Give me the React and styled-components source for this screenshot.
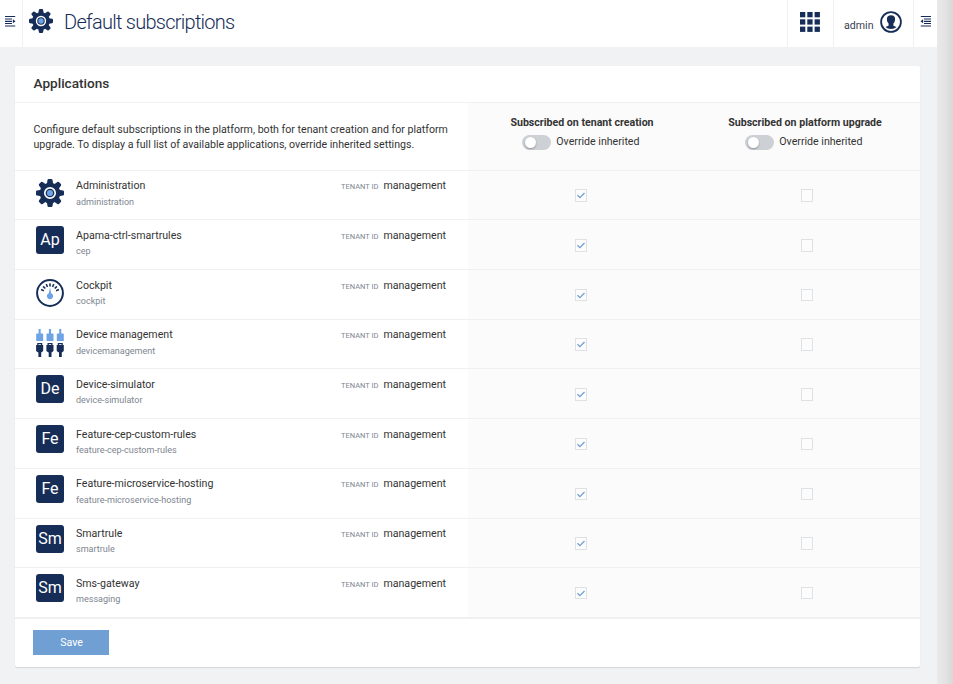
import React from "react";
import styled, { createGlobalStyle } from "styled-components";

const NAVY = "#162d57";
const BLUE = "#6ea4e6";

const Global = createGlobalStyle`
  * { box-sizing: border-box; }
  html, body { margin: 0; }
  body {
    background: #f1f2f4;
    color: #333;
    font-family: Roboto, "Liberation Sans", sans-serif;
    font-size: 10.62px;
    line-height: 15.2px;
    overflow: hidden;
  }
`;

const Screen = styled.div`
  display: grid;
  grid-template-columns: 937px 16px;
  height: 684px;
`;

const EdgeShade = styled.div`
  background: linear-gradient(90deg, #e9e9e9, #e4e4e4 50%, #d8d8d8);
`;

const Header = styled.header`
  display: flex;
  height: 47px;
  background: #fff;
  color: ${NAVY};
`;

const HeaderCell = styled.div`
  display: flex;
  flex: none;
  width: ${(p) => p.$width}px;
  border-${(p) => p.$edge}: 1px solid #f0f1f2;
  padding: ${(p) => p.$pad};
`;

const TitleBar = styled.div`
  display: flex;
  flex: 1;
  padding: 9px 0 0 6px;
`;

const Title = styled.h1`
  margin: 0 0 0 11px;
  font-size: 20px;
  font-weight: 300;
  letter-spacing: -0.73px;
  line-height: 26px;
  white-space: nowrap;
`;

const UserName = styled.span`
  margin: 7px 6px 0 0;
  color: #3a4152;
  line-height: 15px;
`;

const Card = styled.main`
  width: 905px;
  height: 601px;
  margin: 19px 0 0 15px;
  background: #fff;
  border-radius: 2px;
  box-shadow: 0 1px 1px rgba(0, 0, 0, 0.12);
`;

const CardTitle = styled.h2`
  height: 36px;
  margin: 0;
  padding: 8px 18.5px 0;
  font-size: 13.6px;
  font-weight: 500;
  line-height: 18px;
`;

const Row = styled.div`
  display: grid;
  grid-template-columns: 453px 226px 226px;
  height: ${(p) => p.$height}px;
`;

const Cell = styled.div`
  display: flex;
  border-top: 1px solid #f0f0f1;
  background: ${(p) => (p.$shaded ? "#fbfbfb" : "#fff")};
`;

const Intro = styled.p`
  margin: 18.5px 0 0 18.5px;
  white-space: nowrap;
`;

const ColumnHead = styled(Cell)`
  flex-direction: column;
  align-items: center;
  padding: 12px ${(p) => p.$right}px 0 ${(p) => p.$left}px;
`;

const ColumnTitle = styled.div`
  font-weight: 700;
  white-space: nowrap;
`;

const ToggleRow = styled.div`
  display: flex;
  margin: 4px 2.5px 0 0;
`;

const Track = styled.span`
  width: 29px;
  height: 15px;
  margin: 1px 5.3px 0 0;
  padding: 2px 3px;
  border-radius: 8px;
  background: #cdd1d5;
`;

const Knob = styled.span`
  display: block;
  width: 11px;
  height: 11px;
  border-radius: 50%;
  background: #fff;
  box-shadow: 0 1px 2px rgba(0, 0, 0, 0.3);
`;

const AppCell = styled(Cell)`
  padding: 6px 22px 0 21px;
`;

const IconSlot = styled.span`
  flex: none;
  width: 28px;
  height: 28px;
  margin-top: ${(p) => (p.$drawn ? 2.8 : 0)}px;
`;

const Initials = styled.span`
  display: block;
  height: 28px;
  border-radius: 3px;
  background: ${NAVY};
  color: #fff;
  font-size: 16px;
  line-height: 28px;
  text-align: center;
`;

const Names = styled.div`
  flex: 1;
  margin: 1.64px 0 0 12px;
`;

const Slug = styled.div`
  color: #7e868f;
  font-size: 9.05px;
  line-height: 16px;
`;

const Tenant = styled.div`
  display: flex;
  align-items: baseline;
  height: 16px;
  margin-top: 1.64px;
`;

const TenantLabel = styled.span`
  margin-right: 5px;
  color: #7e868f;
  font-size: 7.5px;
`;

const CheckCell = styled(Cell)`
  justify-content: center;
  padding-top: 18.7px;
`;

const Box = styled.span`
  display: block;
  width: 12px;
  height: 12.5px;
  border: 1px solid #dfe2e5;
  background: #fcfcfc;
`;

const Footer = styled.footer`
  padding: 11.1px 18px;
  border-top: 2px solid #f0f0f1;
`;

const SaveButton = styled.button`
  display: block;
  width: 76px;
  height: 25px;
  border: 0;
  padding: 0 0 0 1px;
  background: #709fd4;
  color: #fff;
  font: inherit;
`;

const Svg = styled.svg`
  display: block;
  flex: none;
`;

const TEETH = [0, 45, 90, 135, 180, 225, 270, 315];

function Gear({ size }) {
  return (
    <Svg width={size} height={size} viewBox="0 0 28 28">
      <g fill={NAVY}>
        <circle cx="14" cy="14" r="10.3" />
        {TEETH.map((a) => (
          <path key={a} d="M10.8 5.2 11.5 1.1Q11.7 0 12.6 0h2.8q.9 0 1.1 1.1L17.2 5.2z" transform={`rotate(${a} 14 14)`} />
        ))}
      </g>
      <circle cx="14" cy="14" r="5.2" fill={NAVY} stroke="#fff" strokeWidth="1.7" />
      <circle cx="14" cy="14" r="3.1" fill={BLUE} />
    </Svg>
  );
}

const TICKS = [-69, -46, -23, 0, 23, 46, 69];

function Gauge() {
  return (
    <Svg width="28" height="28" viewBox="0 0 28 28">
      <circle cx="14" cy="14" r="12.9" fill="#fff" stroke={NAVY} strokeWidth="2" />
      {TICKS.map((a) => (
        <rect key={a} x="13.2" y="4.4" width="1.6" height="3.1" fill={NAVY} transform={`rotate(${a} 14 14)`} />
      ))}
      <path d="M14 8.5 15.2 14.2a3.1 3.1 0 1 1-2.4 0z" fill={BLUE} />
    </Svg>
  );
}

function Plugs() {
  return (
    <Svg width="28" height="28" viewBox="0 0 28 28">
      {[0, 10.3, 20.6].map((x) => (
        <g key={x} transform={`translate(${x} 0)`}>
          <path d="M2.6 0h2.1v4.6h1.8q.7 0 .7.7V12H.2V5.3q0-.7.7-.7h1.7z" fill={BLUE} />
          <path d="M1.2 14h5v2h1v5.6q0 .7-.6 1L5.2 23.4V28H2.4v-4.6L.7 22.6q-.6-.3-.6-1V16h1.1z" fill={NAVY} />
          <path d="M2.5 15.1h2.4v.8H2.5z" fill="#fff" />
        </g>
      ))}
    </Svg>
  );
}

const SideIconBox = styled(Svg)`
  margin-top: 1px;
`;

function SideIcon({ flip }) {
  return (
    <SideIconBox width="11" height="11" viewBox="0 0 11 11">
      <g fill={NAVY} transform={flip ? "translate(11 0) scale(-1 1)" : undefined}>
        <path d="M0 0h10.2v1.1H0zM0 2.5h7v1.1H0zM0 4.7h7v1.2H0zM0 7h7v1.1H0zM0 9.5h10.2v1.1H0z" />
        <path d="M7.9 3.3l2.6 2-2.6 2z" />
      </g>
    </SideIconBox>
  );
}

function GridIcon() {
  return (
    <Svg width="20" height="20" viewBox="0 0 20 20" fill={NAVY}>
      {[0, 7.3, 14.6].map((y) =>
        [0, 7.3, 14.6].map((x) => <rect key={`${x}-${y}`} x={x} y={y} width="5.3" height="5.3" />)
      )}
    </Svg>
  );
}

function UserIcon() {
  return (
    <Svg width="22" height="22" viewBox="0 0 22 22">
      <circle cx="11" cy="11" r="9.9" fill="#fff" stroke={NAVY} strokeWidth="1.8" />
      <path d="M11 4.3c2.8 0 4.1 1.5 4.1 3.8 0 2.1-.8 3.4-1.7 4.5v1.8c.3.8 2.4.8 3.2 1.7Q14.5 18 11 18t-5.6-1.9c.8-.9 2.9-.9 3.2-1.7v-1.8c-.9-1.1-1.7-2.4-1.7-4.5 0-2.3 1.3-3.8 4.1-3.8z" fill={NAVY} />
    </Svg>
  );
}

const APPS = [
  { name: "Administration", slug: "administration", icon: <Gear size={28} /> },
  { name: "Apama-ctrl-smartrules", slug: "cep", initials: "Ap" },
  { name: "Cockpit", slug: "cockpit", icon: <Gauge /> },
  { name: "Device management", slug: "devicemanagement", icon: <Plugs /> },
  { name: "Device-simulator", slug: "device-simulator", initials: "De" },
  { name: "Feature-cep-custom-rules", slug: "feature-cep-custom-rules", initials: "Fe" },
  { name: "Feature-microservice-hosting", slug: "feature-microservice-hosting", initials: "Fe" },
  { name: "Smartrule", slug: "smartrule", initials: "Sm" },
  { name: "Sms-gateway", slug: "messaging", initials: "Sm" },
];

function Checkbox({ checked }) {
  return (
    <Box role="checkbox" aria-checked={checked}>
      {checked && (
        <Svg width="10" height="10" viewBox="0 0 10 10">
          <path d="M1.5 5.3 3.9 7.7 8.5 3" fill="none" stroke="#709fd4" strokeWidth="1.3" />
        </Svg>
      )}
    </Box>
  );
}

function SubscriptionHead({ title, left, right }) {
  return (
    <ColumnHead $shaded $left={left} $right={right}>
      <ColumnTitle>{title}</ColumnTitle>
      <ToggleRow>
        <Track role="switch" aria-checked="false"><Knob /></Track>
        Override inherited
      </ToggleRow>
    </ColumnHead>
  );
}

function AppRow({ app }) {
  return (
    <Row $height={49.69}>
      <AppCell>
        <IconSlot $drawn={!!app.icon}>{app.icon || <Initials>{app.initials}</Initials>}</IconSlot>
        <Names>
          <div>{app.name}</div>
          <Slug>{app.slug}</Slug>
        </Names>
        <Tenant>
          <TenantLabel>TENANT ID</TenantLabel>
          management
        </Tenant>
      </AppCell>
      <CheckCell $shaded><Checkbox checked /></CheckCell>
      <CheckCell $shaded><Checkbox checked={false} /></CheckCell>
    </Row>
  );
}

export default function App() {
  return (
    <>
      <Global />
      <Screen>
        <div>
          <Header>
            <HeaderCell $width={23} $edge="right" $pad="15px 0 0 5px"><SideIcon /></HeaderCell>
            <TitleBar>
              <Gear size={24} />
              <Title>Default subscriptions</Title>
            </TitleBar>
            <HeaderCell $width={46} $edge="left" $pad="12px 0 0 12px"><GridIcon /></HeaderCell>
            <HeaderCell $width={80} $edge="left" $pad="11px 0 0 10px">
              <UserName>admin</UserName>
              <UserIcon />
            </HeaderCell>
            <HeaderCell $width={24} $edge="left" $pad="15px 0 0 6px"><SideIcon flip /></HeaderCell>
          </Header>
          <Card>
            <CardTitle>Applications</CardTitle>
            <Row $height={67.7}>
              <Cell>
                <Intro>
                  Configure default subscriptions in the platform, both for tenant creation and for platform<br />
                  upgrade. To display a full list of available applications, override inherited settings.
                </Intro>
              </Cell>
              <SubscriptionHead title="Subscribed on tenant creation" left={2} right={0} />
              <SubscriptionHead title="Subscribed on platform upgrade" left={0} right={4} />
            </Row>
            {APPS.map((app) => <AppRow key={app.slug} app={app} />)}
            <Footer><SaveButton>Save</SaveButton></Footer>
          </Card>
        </div>
        <EdgeShade />
      </Screen>
    </>
  );
}
